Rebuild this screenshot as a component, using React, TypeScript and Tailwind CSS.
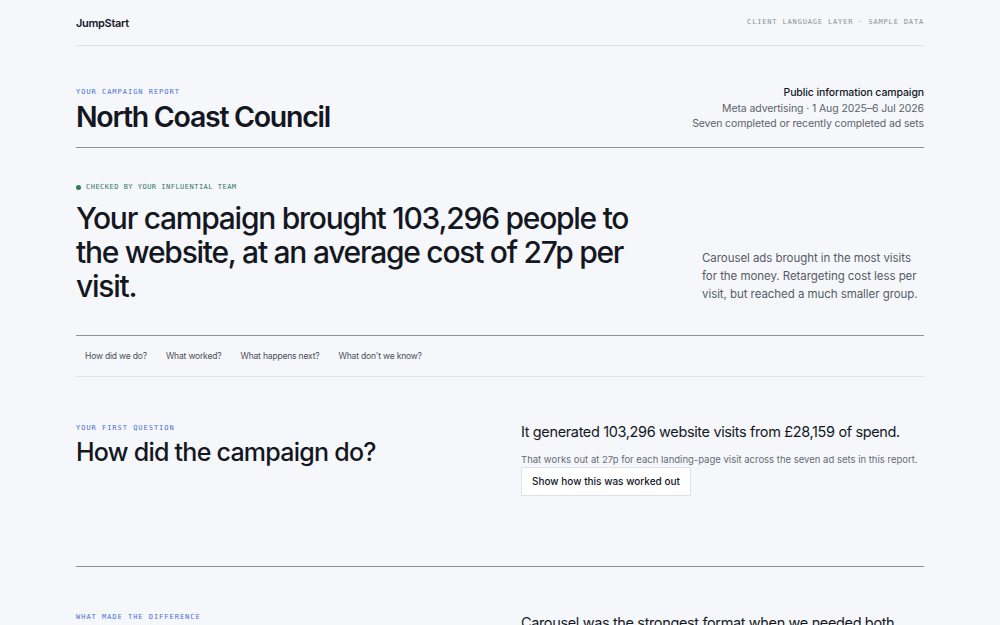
import React from 'react'

const NAV = ['How did we do?', 'What worked?', 'What happens next?', "What don't we know?"]

const sans = { fontFamily: 'Inter, "Noto Sans", sans-serif' }
const mono = { fontFamily: '"DejaVu Sans Mono", "Liberation Mono", monospace' }

function Eyebrow({ children, className = '' }: { children: React.ReactNode; className?: string }) {
  return (
    <p className={`text-[7px] leading-[10px] uppercase tracking-[0.14em] text-[#4a6fd8] ${className}`} style={mono}>
      {children}
    </p>
  )
}

export default function App() {
  return (
    <div className="min-h-screen bg-[#f5f7fb] text-[#14171f]" style={sans}>
      <div className="mx-auto w-[848px]">
        {/* Top bar */}
        <header className="flex h-[46px] items-center justify-between border-b border-[#dfe2e8]">
          <span className="pt-[1px] text-[11px] font-semibold tracking-[-0.03em]">JumpStart</span>
          <span className="text-[7px] uppercase tracking-[0.12em] text-[#8a8f99]" style={mono}>
            Client language layer · Sample data
          </span>
        </header>

        {/* Report title */}
        <section className="flex items-start justify-between border-b border-[#8c8f96] pt-[41px] pb-[13px]">
          <div>
            <Eyebrow>Your campaign report</Eyebrow>
            <h1 className="mt-[3px] text-[28.5px] font-semibold leading-[34px] tracking-[-0.045em]">North Coast Council</h1>
          </div>
          <div className="-mt-[2px] text-right text-[10.5px] leading-[15.5px] tracking-[-0.01em]">
            <p className="font-medium text-[#14171f]">Public information campaign</p>
            <p className="text-[#5d626c]">Meta advertising · 1 Aug 2025–6 Jul 2026</p>
            <p className="text-[#5d626c]">Seven completed or recently completed ad sets</p>
          </div>
        </section>

        {/* Headline */}
        <section className="flex items-end justify-between border-b border-[#8c8f96] pt-[34px] pb-[32px]">
          <div>
            <p
              className="flex items-center gap-[5px] text-[7px] leading-[10px] uppercase tracking-[0.07em] text-[#2f7a57]"
              style={mono}
            >
              <span className="inline-block h-[5px] w-[5px] rounded-full bg-[#2f7a57]" />
              Checked by your influential team
            </p>
            <h2 className="mt-[9px] w-[568px] text-[30px] font-medium leading-[34px] tracking-[-0.042em]">
              Your campaign brought 103,296 people to the website, at an average cost of 27p per visit.
            </h2>
          </div>
          <p className="w-[222px] text-[11.5px] leading-[18px] tracking-[-0.005em] text-[#555b66]">
            Carousel ads brought in the most visits for the money. Retargeting cost less per visit, but reached a much smaller group.
          </p>
        </section>

        {/* Section nav */}
        <nav className="flex h-[41px] items-center gap-[19px] border-b border-[#dfe2e8] px-[9px] text-[8.5px] tracking-[-0.02em] text-[#4a4f59]">
          {NAV.map((n) => (
            <span key={n}>{n}</span>
          ))}
        </nav>

        {/* First question */}
        <section className="grid grid-cols-[421px_1fr] gap-6 border-b border-[#8c8f96] pt-[46px] pb-[70px]">
          <div>
            <Eyebrow>Your first question</Eyebrow>
            <h3 className="mt-[3px] text-[25px] font-medium leading-[32px] tracking-[-0.03em]">How did the campaign do?</h3>
          </div>
          <div className="-mt-[2px]">
            <p className="text-[14.5px] leading-[22px] tracking-[-0.025em]">
              It generated 103,296 website visits from £28,159 of spend.
            </p>
            <p className="mt-[10px] text-[9.5px] leading-[14px] text-[#666b75]">
              That works out at 27p for each landing-page visit across the seven ad sets in this report.
            </p>
            <button
              type="button"
              className="mt-0 h-[29px] border border-[#dfe2e8] bg-white px-[10px] text-[10px] font-medium text-[#14171f]"
            >
              Show how this was worked out
            </button>
          </div>
        </section>

        {/* Next question */}
        <section className="grid grid-cols-[421px_1fr] gap-6 pt-[45px]">
          <div>
            <Eyebrow>What made the difference</Eyebrow>
          </div>
          <div>
            <p className="text-[14.5px] leading-[22px] tracking-[-0.025em]">
              Carousel was the strongest format when we needed both
            </p>
          </div>
        </section>
      </div>
    </div>
  )
}
